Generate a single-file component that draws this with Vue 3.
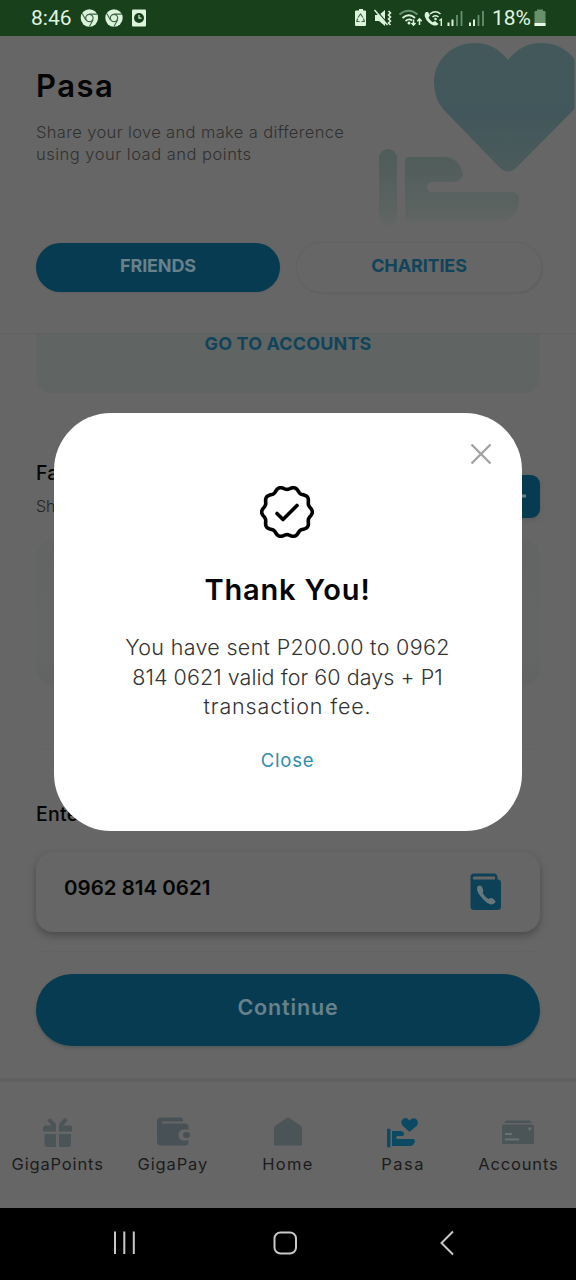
<script setup>
// Scalloped outline of the confirmation badge: ten lobes round a circle.
const badgePath = (() => {
  const points = []
  for (let i = 0; i < 200; i++) {
    const a = (i / 200) * Math.PI * 2
    const r = 24 + 1.35 * Math.cos(10 * a)
    points.push(`${(27 + r * Math.cos(a)).toFixed(2)} ${(27 + r * Math.sin(a)).toFixed(2)}`)
  }
  return `M${points.join('L')}Z`
})()
</script>

<template>
  <div class="phone">
    <div class="status">
      <span class="time">8:46</span>
      <svg class="left-icons" width="70" height="20" viewBox="0 0 70 20">
        <g v-for="x in [9.4, 34]" :key="x" :transform="`translate(${x} 10)`">
          <circle r="8.7" fill="#dcf3dc" />
          <circle r="3.7" fill="#dcf3dc" stroke="#3f6345" stroke-width="1.2" />
          <path d="M0-3.9H7.8M-3.6 2L-7.2-4.6M3.6 2L0 8.5" stroke="#3f6345" stroke-width="1.1" />
        </g>
        <rect x="52" y="1.5" width="14" height="17" rx="1" fill="#dcf3dc" />
        <circle cx="59" cy="10" r="5" fill="#17401b" />
        <path d="M59 7v3.2h2.5" stroke="#dcf3dc" stroke-width="1.2" fill="none" />
      </svg>
      <svg class="right-icons" width="134" height="24" viewBox="0 0 134 24" fill="none">
        <path d="M4 4.5h2V3h4v1.500h2q1 0 1 1V19q0 1-1 1H3q-1 0-1-1V5.500q0-1 1-1z" fill="#dcf3dc" />
        <path d="M5 11.500L7.500 8l2.500 3.500M10.500 12.500l.8 3H8.500M6.500 15.500H3.800l.8-3" stroke="#3f6345" stroke-width="1.1" />
        <path d="M22 9h4l6-5v16l-6-5h-4z" fill="#dcf3dc" />
        <path d="M23 4l12 14" stroke="#17401b" stroke-width="1.300" />
        <path d="M21.500 4l13 15" stroke="#dcf3dc" stroke-width="1.500" />
        <path d="M35.500 5l2 2-2 2 2 2-2 2 2 2-2 2 2 2" stroke="#dcf3dc" stroke-width="1.600" />
        <path d="M46.500 8.500q9-7.500 18 0" stroke="#66916a" stroke-width="2" />
        <path d="M49.500 12q6.500-5.500 12.500 0M52.500 15q3.500-3 6.500-.5" stroke="#dcf3dc" stroke-width="1.900" />
        <circle cx="56" cy="17" r="1.500" fill="#dcf3dc" />
        <path d="M60.500 13.500v5M58.500 17l2 2.200 2-2.200M66.500 19v-6M64.300 15.300l2.200-2.500 2.200 2.500" stroke="#dcf3dc" stroke-width="1.500" />
        <path d="M73 6q-2 1.500-1 5 2.500 6.500 9 8.500 3 .5 4.500-1.500l-3.500-3-2.500 1.200q-2.500-1.500-4-4.700l1.500-2L75 6z" fill="#dcf3dc" />
        <path d="M77 8q5.500-4.500 10.500 0M79.500 11q3-2.500 6 0" stroke="#dcf3dc" stroke-width="1.500" />
        <circle cx="82.500" cy="13" r="1.300" fill="#dcf3dc" />
        <path d="M86.300 14.500l2-1.300v6.800" stroke="#dcf3dc" stroke-width="1.400" />
        <path d="M95.500 16.500V20M99.500 13.500V20" stroke="#dcf3dc" stroke-width="2" />
        <path d="M104 9V20M108.500 5V20" stroke="#66916a" stroke-width="1.800" />
        <path d="M117 16.500V20M121 13.500V20" stroke="#dcf3dc" stroke-width="2" />
        <path d="M125.500 9V20M130 5V20" stroke="#66916a" stroke-width="1.800" />
      </svg>
      <span class="percent">18%</span>
      <svg width="12" height="18" viewBox="0 0 12 18">
        <path d="M3 2V.5h6V2h1.500q1 0 1 1v14H.5V3q0-1 1-1z" fill="#66916a" />
        <path d="M.5 14h11v3H.5z" fill="#e6f8e6" />
      </svg>
    </div>

    <header class="header">
      <svg class="hero" width="200" height="200" viewBox="376 36 200 200">
        <defs>
          <linearGradient id="heartFill" x1="0" y1="0" x2="0" y2="1">
            <stop offset="0" stop-color="#43585a" />
            <stop offset=".55" stop-color="#42575b" />
            <stop offset="1" stop-color="#4c5b5b" />
          </linearGradient>
          <linearGradient id="handFill" gradientUnits="userSpaceOnUse" x1="0" y1="150" x2="0" y2="228">
            <stop offset="0" stop-color="#4f5c5a" />
            <stop offset=".75" stop-color="#5b6361" />
            <stop offset="1" stop-color="#656666" />
          </linearGradient>
        </defs>
        <path d="M508 60C498 48 488 43 475 43C451 43 434 61 434 82Q434 98 443 109L499 167Q508 176 517 167L574.500 109V59Q562 43 541 43C527 43 517 49 508 60Z" fill="url(#heartFill)" />
        <rect x="379" y="149" width="18" height="78" rx="9" fill="url(#handFill)" />
        <path d="M409 157H443Q459 157 463 174Q462 182 452 182H433Q427 182 427 187Q427 192 433 192H512Q519 192 519 199Q518 222 498 222H405V161Q405 157 409 157Z" fill="url(#handFill)" />
      </svg>
      <h1>Pasa</h1>
      <p class="tagline"><span class="t1">Share your love and make a difference</span><br><span class="t2">using your load and points</span></p>
      <div class="tabs">
        <button class="tab active">FRIENDS</button>
        <button class="tab">CHARITIES</button>
      </div>
    </header>

    <main class="content">
      <section class="accounts">GO TO ACCOUNTS</section>
      <section class="favorites">
        <div>
          <h2>Fa</h2>
          <p>Sh</p>
        </div>
        <button class="add">
          <svg width="14" height="14" viewBox="0 0 14 14"><path d="M0 6h14M7 0v14" stroke="#66808b" stroke-width="3" stroke-linecap="round" /></svg>
        </button>
      </section>
      <div class="empty"></div>
      <hr class="rule">
      <h2 class="enter">Ente</h2>
      <div class="number">
        <span>0962 814 0621</span>
        <svg width="32" height="38" viewBox="0 0 32 38">
          <path d="M4 .5H24Q27 .5 27.500 4V6.500H28Q31 6.500 31 10V33.500Q31 37 27.500 37H4Q.5 37 .5 33.500V4Q.5 .5 4 .5Z" fill="#0c4158" />
          <path d="M4 3.500H25V6.500H4Q2.800 6.500 2.800 5T4 3.500Z" fill="#666" />
          <path d="M8 13Q11 11.500 12.500 15T12.500 20Q15 24 18.500 26Q21 24 24 26.500Q27 29 24 30.500Q20 33.500 13.500 26.500Q6 19 7 14.500Z" fill="#66777e" />
        </svg>
      </div>
      <hr class="rule second">
      <button class="continue">Continue</button>
    </main>

    <nav class="nav">
      <div class="item">
        <svg width="32" height="32" viewBox="0 0 32 32" fill="#4b5558">
          <path d="M2 10.500Q1.500 9.500 3 9.500H10L5.500 5Q5.500 2 8.500 2.500L14 8V9.500H17V8L22 2.500Q25 1.500 25.500 4.500L21 9.500H28.500Q30 9.500 30 11V15.500H17V9.500H14V15.500H1V11Z" />
          <path d="M2.500 18H14V31H6Q2.500 31 2.500 28ZM17 18H29V28Q29 31 25.500 31H17Z" />
        </svg>
        <span>GigaPoints</span>
      </div>
      <div class="item">
        <svg width="34" height="32" viewBox="0 0 34 32">
          <path d="M5 1.500H24Q27 1.500 27 4.500V5.500H6V7.500H29Q32.500 7.500 32.500 11V13.500H28Q22.500 13.500 22.500 19T28 24.500H32.500V26Q32.500 29.500 29 29.500H5Q1 29.500 1 25.500V5.500Q1 1.500 5 1.500Z" fill="#485156" />
          <rect x="27" y="16" width="7" height="6" rx="3" fill="#485156" />
        </svg>
        <span class="pay">GigaPay</span>
      </div>
      <div class="item">
        <svg width="32" height="32" viewBox="0 0 32 32">
          <path d="M2 12Q2 11 3 10L14.500 2Q16 1 17.500 2L29 10Q30 11 30 12V29.500H2Z" fill="#4b5558" />
        </svg>
        <span class="home">Home</span>
      </div>
      <div class="item">
        <svg width="34" height="32" viewBox="0 0 34 32" fill="#0c4962">
          <path d="M23.500 4.500Q20 .500 17 3Q14 6 16.500 9.500L23 15.500Q23.500 16 24 15.500L31 9.500Q33 6 30.500 3.500Q27 .500 23.500 4.500Z" />
          <rect x="1" y="12.500" width="3.500" height="19" rx="1.500" />
          <path d="M6 15H14Q18 15 18 18Q18 20 15 20H11.500Q10 20 10 21.500T11.500 23H27Q29 23 29 25Q28 30 24 30H6Z" />
        </svg>
        <span class="pasa">Pasa</span>
      </div>
      <div class="item">
        <svg width="34" height="32" viewBox="0 0 34 32">
          <path d="M5 4.500H29L31 7H3Z" fill="#4b5558" />
          <rect x="1" y="8.500" width="32" height="19.500" rx="1.500" fill="#4b5558" />
          <path d="M4 18H11M4 23.500H18" stroke="#687173" stroke-width="2" />
          <path d="M26.500 11.500H31L29 15Z" fill="#687173" />
        </svg>
        <span>Accounts</span>
      </div>
    </nav>

    <footer class="system">
      <svg width="576" height="72" viewBox="0 0 576 72" fill="none" stroke="#c8c8c8" stroke-width="2">
        <path d="M115 23.500V46M124.300 23.500V46M133.800 23.500V46" />
        <rect x="274.500" y="24.500" width="21.500" height="21" rx="6" />
        <path d="M453 23.500L441.500 35L453 46.500" />
      </svg>
    </footer>

    <div class="modal">
      <svg class="dismiss" width="22" height="22" viewBox="0 0 22 22"><path d="M1.500 1.500l19 19M20.500 1.500l-19 19" stroke="#a2a2a2" stroke-width="2.300" /></svg>
      <svg class="badge" width="54" height="54" viewBox="0 0 54 54" fill="none" stroke="#000" stroke-linejoin="round">
        <path :d="badgePath" stroke-width="3.600" />
        <path d="M17 28.500L23 34.500L37 20.500" stroke-width="3.600" stroke-linecap="round" />
      </svg>
      <h3>Thank You!</h3>
      <p><span class="m1">You have sent P200.00 to 0962</span><br><span class="m2">814 0621 valid for 60 days + P1</span><br><span class="m3">transaction fee.</span></p>
      <a class="close">Close</a>
    </div>
  </div>
</template>

<style>
body {
  background: #666;
}
</style>

<style scoped>
* {
  box-sizing: border-box;
}
.phone {
  position: relative;
  display: flex;
  flex-direction: column;
  width: 576px;
  height: 1280px;
  overflow: hidden;
  background: #666;
  font-family: Inter, "Noto Sans", sans-serif;
  color: #050505;
}
h1, h2, h3, p, hr {
  margin: 0;
}
button {
  border: 0;
  padding: 0;
  font-family: inherit;
}
svg {
  display: block;
  flex: none;
}
.status {
  display: flex;
  align-items: center;
  height: 36px;
  padding: 0 30px 0 31px;
  background: #17401b;
  color: #e0f5e0;
  font-family: Roboto, sans-serif;
}
.time {
  width: 49px;
  font-size: 21px;
  white-space: nowrap;
}
.left-icons {
  margin-right: auto;
}
.right-icons {
  margin-right: 5px;
}
.percent {
  width: 42px;
  margin-right: 0;
  font-size: 21px;
}
.header {
  position: relative;
  height: 298px;
  padding: 32px 35px 0 36px;
  border-bottom: 1px solid #616161;
}
.hero {
  position: absolute;
  right: 0;
  top: 0;
}
h1 {
  font-size: 31px;
  line-height: 36px;
  font-weight: 600;
  letter-spacing: 1.5px;
}
.tagline {
  position: relative;
  margin-top: 17px;
  font-size: 16.500px;
  font-weight: 300;
  line-height: 22.400px;
  color: #303030;
}
.t1 {
  letter-spacing: .36px;
}
.t2 {
  letter-spacing: .5px;
}
.tabs {
  position: relative;
  display: flex;
  gap: 17px;
  margin-top: 77px;
}
.tab {
  flex: 1;
  height: 49px;
  padding-bottom: 3px;
  border-radius: 25px;
  background: #666;
  color: #11445a;
  font-size: 18px;
  font-weight: 700;
  letter-spacing: -.14px;
  box-shadow: 0 0 1px 1px #626262, 1px 1px 2px #595959;
}
.active {
  background: #073b51;
  color: #68818b;
  box-shadow: 0 1px 2px #5c6163;
}
.content {
  height: 744px;
  padding: 0 36px;
}
.accounts {
  height: 59px;
  border-radius: 0 0 16px 16px;
  background: #606463;
  color: #11445a;
  font-size: 18px;
  font-weight: 700;
  line-height: 19px;
  letter-spacing: .13px;
  text-align: center;
}
.favorites {
  display: flex;
  justify-content: space-between;
  height: 147px;
  padding-top: 66px;
}
h2 {
  font-size: 19.500px;
  line-height: 28px;
  font-weight: 500;
  letter-spacing: .3px;
}
.favorites p {
  margin-top: 8px;
  font-size: 16px;
  font-weight: 300;
  line-height: 22px;
  color: #222;
}
.add {
  display: grid;
  place-items: center;
  width: 42px;
  height: 43px;
  margin-top: 16px;
  border-radius: 9px;
  background: #073b51;
  box-shadow: 0 2px 4px #5b5b5b;
}
.empty {
  height: 145px;
  border-radius: 16px;
  background: linear-gradient(#636464, #646565 80%, #616463);
}
.rule {
  height: 1px;
  margin-top: 64px;
  border: 0;
  background: #636363;
}
.enter {
  margin-top: 50px;
}
.number {
  display: flex;
  align-items: center;
  justify-content: space-between;
  height: 80px;
  margin-top: 24px;
  padding: 0 38px 0 28px;
  border-radius: 17px;
  background: #666;
  box-shadow: 0 4px 7px #4d4d4d, 0 0 3px #626262;
  font-size: 20.500px;
  font-weight: 600;
}
.number span {
  padding-bottom: 9px;
}
.rule.second {
  margin-top: 19px;
}
.continue {
  display: block;
  width: 100%;
  height: 72px;
  margin-top: 22px;
  padding-bottom: 6px;
  border-radius: 36px;
  background: #073b51;
  box-shadow: 0 2px 3px #535959;
  color: #68818b;
  font-size: 21.500px;
  font-weight: 600;
  letter-spacing: .85px;
}
.nav {
  display: flex;
  height: 130px;
  padding-top: 34px;
  border-top: 4px solid #616161;
}
.item {
  display: flex;
  flex: 1;
  flex-direction: column;
  align-items: center;
  gap: 5px;
  color: #1c1c1c;
  font-size: 16.500px;
  line-height: 22px;
  letter-spacing: .85px;
}
.home {
  letter-spacing: 1.300px;
}
.pasa {
  letter-spacing: 1.500px;
}
.system {
  height: 72px;
  background: #000;
}
.modal {
  position: absolute;
  left: 53.500px;
  top: 413px;
  display: flex;
  flex-direction: column;
  align-items: center;
  width: 468px;
  height: 418px;
  padding-top: 72px;
  border-radius: 57px;
  background: #fff;
  text-align: center;
}
.dismiss {
  position: absolute;
  right: 30px;
  top: 30px;
}
.badge {
  margin-right: 1px;
}
h3 {
  margin-top: 33px;
  font-size: 29px;
  line-height: 36px;
  font-weight: 600;
  letter-spacing: .850px;
}
.modal p {
  margin-top: 25px;
  font-size: 21.500px;
  line-height: 29.600px;
  font-weight: 300;
  color: #333;
  white-space: nowrap;
}
.m1 {
  letter-spacing: .32px;
}
.m2 {
  letter-spacing: .05px;
}
.m3 {
  letter-spacing: .85px;
}
.close {
  margin-top: 26px;
  color: #2f8dae;
  font-size: 18.500px;
  line-height: 24px;
  letter-spacing: .750px;
}
</style>
